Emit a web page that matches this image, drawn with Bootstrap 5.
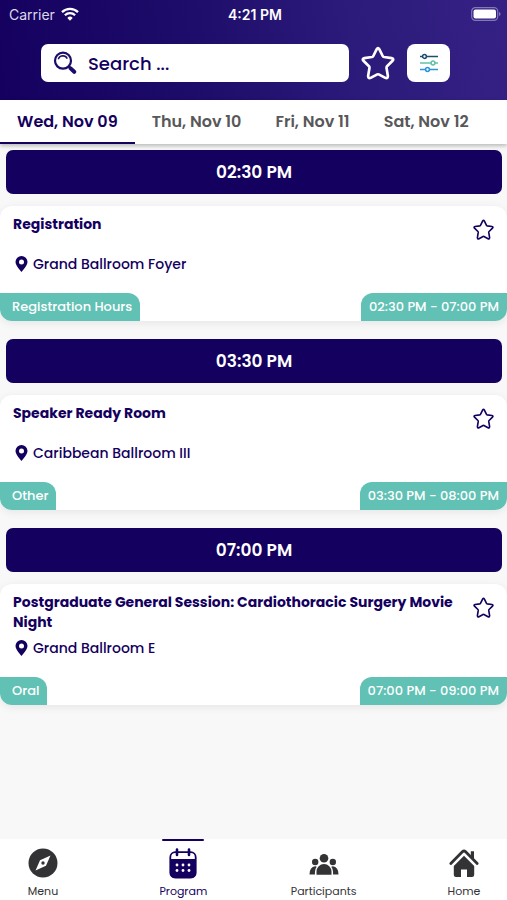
<!DOCTYPE html>
<html lang="en">
<head>
<meta charset="utf-8">
<meta name="viewport" content="width=device-width, initial-scale=1">
<title>Program</title>
<link rel="stylesheet" href="https://cdn.jsdelivr.net/npm/bootstrap@5.3.0/dist/css/bootstrap.min.css">
<style>
:root { --navy: #14005e; --teal: #62c1b5; --ink: #333336; }
body { font-family: Poppins, Inter, "Liberation Sans", sans-serif; background: #f8f8f8; color: var(--navy); }
svg { display: block; flex: none; }
.top-area { background: linear-gradient(80deg, #15005f 0%, #1e0d6a 40%, #2c1b7b 70%, #352184 100%); color: #fff; }
.status-bar { height: 28px; padding: 0 6px 0 9px; font-family: Inter, "Liberation Sans", sans-serif; font-size: 14px; display: grid; grid-template-columns: 1fr auto 1fr; align-items: center; }
.status-bar .clock { font-weight: 600; }
.carrier { color: #dcd9ec; gap: 6px; }
.tools { padding: 16px 57px 18px 41px; gap: 12px; }
.search-field { height: 38px; min-width: 0; border-radius: 7px; background: #fff; padding: 0 12px; gap: 11px; }
.search-field input { width: 100%; border: 0; outline: 0; background: none; padding: 0; min-width: 0; font-size: 18px; font-weight: 500; color: var(--navy); }
.search-field input::placeholder { color: var(--navy); opacity: 1; }
.bare { border: 0; background: none; padding: 0; color: inherit; }
.save-btn { margin-top: 5px; }
.filter-btn { width: 43px; height: 38px; flex: none; padding: 0; border: 0; border-radius: 8px; background: #fff; }
.day-tabs { background: #fff; box-shadow: 0 2px 4px rgba(0,0,0,.25); position: relative; }
.day-tabs a { height: 44px; padding: 0 17px; font-size: 16px; font-weight: 600; line-height: 44px; color: #58585a; text-decoration: none; white-space: nowrap; }
.day-tabs a.active { color: var(--navy); box-shadow: inset 0 -2px var(--navy); }
.slot { margin: 18px 5px 12px 6px; height: 44px; border-radius: 7px; background: var(--navy); color: #fff; font-size: 17px; font-weight: 600; line-height: 44px; text-align: center; }
.slot.first-slot { margin-top: 6px; }
.session { background: #fff; border-radius: 12px; box-shadow: 0 2px 8px rgba(0,0,0,.08); overflow: hidden; }
.session-body { padding: 8px 13px 19px; }
.session h2 { font-size: 14px; line-height: 20px; font-weight: 700; min-height: 34px; margin: 0 0 6px; }
.place { font-size: 14px; line-height: 20px; font-weight: 500; gap: 5px; margin: 0; padding-left: 2px; }
.tag { height: 28px; padding: 0 8px; background: var(--teal); color: #fff; font-size: 13px; line-height: 28px; font-weight: 500; white-space: nowrap; }
.tag-kind { padding-left: 12px; border-top-right-radius: 12px; }
.tag-time { border-top-left-radius: 12px; }
.tab-bar { background: #fff; }
.tab-bar a { width: 86px; height: 61px; padding-top: 8px; color: var(--ink); font-size: 11px; line-height: 16px; text-decoration: none; position: relative; }
.tab-bar a.active { color: var(--navy); }
.tab-bar a.active::before { content: ""; position: absolute; top: 0; left: 22px; right: 22px; height: 2px; background: var(--navy); border-radius: 1px; }
</style>
<script src="https://cdn.jsdelivr.net/npm/bootstrap@5.3.0/dist/js/bootstrap.bundle.min.js"></script>
</head>
<body class="d-flex flex-column min-vh-100">
<svg width="0" height="0" class="position-absolute" aria-hidden="true">
  <symbol id="star" viewBox="0 0 32 32"><path d="M14.8 2.9Q16 .8 17.2 2.9L20.4 9.4Q20.8 10.2 21.7 10.4L28.800 11.400Q31.400 12 29.700 13.900L24.500 19Q23.900 19.600 24 20.500L25.300 28.300Q25.300 31 22.900 30L16.700 26.700Q16 26.400 15.300 26.700L9.100 30Q6.700 31 6.700 28.300L8 20.500Q8.100 19.600 7.500 19L2.300 13.900Q.6 12 3.200 11.400L10.300 10.400Q11.200 10.200 11.600 9.400Z" fill="none" stroke="currentColor" stroke-width="2.500" stroke-linejoin="round"/></symbol>
  <symbol id="pin" viewBox="0 0 12 16"><path fill-rule="evenodd" d="M6 0a6 6 0 0 0-6 6c0 3.500 4.800 8.400 6 10 1.200-1.600 6-6.500 6-10a6 6 0 0 0-6-6Zm0 3.400a2.500 2.500 0 1 1 0 5 2.500 2.500 0 0 1 0-5Z" fill="currentColor"/></symbol>
</svg>

<header class="top-area">
  <div class="status-bar">
    <span class="carrier d-flex align-items-center">Carrier
      <svg width="18" height="14" viewBox="0 0 18 14" fill="none" stroke="#fff" stroke-width="2.300" aria-hidden="true"><path d="M1 5.100a11.500 11.500 0 0 1 16 0M3.900 8.200a7.300 7.300 0 0 1 10.200 0"/><path d="M9 13.700 6.300 10.900a3.900 3.900 0 0 1 5.400 0Z" fill="#fff" stroke="none"/></svg>
    </span>
    <span class="clock">4:21 PM</span>
    <svg class="ms-auto" width="30" height="14" viewBox="0 0 30 14" aria-hidden="true"><rect x=".7" y=".7" width="26" height="12.600" rx="3.600" fill="none" stroke="#8377b5" stroke-width="1.200"/><rect x="2.500" y="2.500" width="22.500" height="9" rx="2" fill="#fff"/><path d="M28 5v4q1.600-.6 1.600-2T28 5Z" fill="#8377b5"/></svg>
  </div>
  <div class="tools d-flex align-items-center">
    <label class="search-field d-flex align-items-center flex-grow-1">
      <svg width="24" height="24" viewBox="0 0 24 24" fill="none" stroke="#1c0b68" aria-hidden="true"><circle cx="10" cy="9.700" r="8" stroke-width="2.200"/><path d="M5.300 8.300A5 5 0 0 1 10 4.800q2.900.1 4.300 2.800" stroke-width="1.500"/><path d="m15.700 15.400 2 2" stroke-width="2.200"/><path d="m17.600 17.400 3.600 3.400" stroke-width="4" stroke-linecap="round"/></svg>
      <input type="text" placeholder="Search ..." aria-label="Search">
    </label>
    <button class="bare" type="button" aria-label="Favorites"><svg width="34" height="34"><use href="#star"/></svg></button>
    <button class="filter-btn d-flex align-items-center justify-content-center" type="button" aria-label="Filters">
      <svg width="18" height="20" viewBox="0 0 18 20" stroke-width="1.500" fill="#fff"><g stroke="#1d4d70"><path d="M0 3.500h18"/><circle cx="4.500" cy="3.500" r="1.900"/></g><g stroke="#62c1a8"><path d="M0 10h18"/><circle cx="13" cy="10" r="1.900"/></g><g stroke="#2a94dc"><path d="M0 16.500h18"/><circle cx="7.500" cy="16.500" r="1.900"/></g></svg>
    </button>
  </div>
</header>

<nav class="day-tabs d-flex" aria-label="Days">
  <a href="#wed" class="active" aria-current="date">Wed, Nov 09</a>
  <a href="#thu">Thu, Nov 10</a>
  <a href="#fri">Fri, Nov 11</a>
  <a href="#sat">Sat, Nov 12</a>
</nav>

<main class="flex-grow-1">
  <div class="slot first-slot">02:30 PM</div>
  <article class="session">
    <div class="session-body d-flex justify-content-between">
      <div>
        <h2>Registration</h2>
        <p class="place d-flex align-items-center"><svg width="13" height="16"><use href="#pin"/></svg>Grand Ballroom Foyer</p>
      </div>
      <button class="bare save-btn align-self-start" type="button" aria-label="Add to favorites"><svg width="21" height="21"><use href="#star"/></svg></button>
    </div>
    <div class="d-flex justify-content-between"><span class="tag tag-kind">Registration Hours</span><span class="tag tag-time">02:30 PM - 07:00 PM</span></div>
  </article>

  <div class="slot">03:30 PM</div>
  <article class="session">
    <div class="session-body d-flex justify-content-between">
      <div>
        <h2>Speaker Ready Room</h2>
        <p class="place d-flex align-items-center"><svg width="13" height="16"><use href="#pin"/></svg>Caribbean Ballroom III</p>
      </div>
      <button class="bare save-btn align-self-start" type="button" aria-label="Add to favorites"><svg width="21" height="21"><use href="#star"/></svg></button>
    </div>
    <div class="d-flex justify-content-between"><span class="tag tag-kind">Other</span><span class="tag tag-time">03:30 PM - 08:00 PM</span></div>
  </article>

  <div class="slot">07:00 PM</div>
  <article class="session">
    <div class="session-body d-flex justify-content-between">
      <div>
        <h2>Postgraduate General Session: Cardiothoracic Surgery Movie Night</h2>
        <p class="place d-flex align-items-center"><svg width="13" height="16"><use href="#pin"/></svg>Grand Ballroom E</p>
      </div>
      <button class="bare save-btn align-self-start" type="button" aria-label="Add to favorites"><svg width="21" height="21"><use href="#star"/></svg></button>
    </div>
    <div class="d-flex justify-content-between"><span class="tag tag-kind">Oral</span><span class="tag tag-time">07:00 PM - 09:00 PM</span></div>
  </article>
</main>

<nav class="tab-bar d-flex justify-content-between" aria-label="Main">
  <a href="#menu" class="d-flex flex-column align-items-center gap-1">
    <svg width="32" height="32" viewBox="0 0 32 32"><circle cx="16" cy="16" r="14.500" fill="currentColor"/><path d="M23.500 8.500 19 18.700 8.500 23.500 13 13.300Z" fill="#fff"/><circle cx="16" cy="16" r="1.700" fill="currentColor"/></svg>Menu
  </a>
  <a href="#program" class="active d-flex flex-column align-items-center gap-1" aria-current="page">
    <svg width="32" height="32" viewBox="0 0 32 32"><rect x="3.300" y="5.200" width="25.400" height="25.500" rx="5" fill="none" stroke="currentColor" stroke-width="1.800"/><path d="M3 12h26v14q0 5-5 5H8q-5 0-5-5Z" fill="currentColor"/><path d="M10 2.500v5.500M22 2.500v5.500" stroke="currentColor" stroke-width="2.600" stroke-linecap="round"/><g fill="#fff"><circle cx="10" cy="18" r="1.400"/><circle cx="16" cy="18" r="1.400"/><circle cx="22" cy="18" r="1.400"/><circle cx="10" cy="23.500" r="1.400"/><circle cx="16" cy="23.500" r="1.400"/><circle cx="22" cy="23.500" r="1.400"/></g></svg>Program
  </a>
  <a href="#participants" class="d-flex flex-column align-items-center gap-1">
    <svg width="32" height="32" viewBox="0 0 32 32" fill="currentColor"><circle cx="16" cy="11.200" r="4.300"/><circle cx="7.200" cy="15" r="3.200"/><circle cx="24.800" cy="15" r="3.200"/><path d="M8.500 27.800v-3.300a7.500 7.500 0 0 1 15 0v3.300ZM1.500 27.500q0-7.500 5.700-8.200l1.600.4Q6.800 22 6.900 27.500ZM30.500 27.500q0-7.500-5.700-8.200l-1.600.4q2 2.300 1.900 7.800Z"/></svg>Participants
  </a>
  <a href="#home" class="d-flex flex-column align-items-center gap-1">
    <svg width="32" height="32" viewBox="0 0 32 32"><path d="M2.800 16.500 14.600 4.600Q16 3.300 17.400 4.600L29.200 16.500" fill="none" stroke="currentColor" stroke-width="2.800" stroke-linecap="round"/><path d="M22.800 4.200h3.200v8l-3.200-3.200Z" fill="currentColor"/><path d="M16 8.800 26.200 19v8.800q0 2.200-2.200 2.200h-5v-7.500h-6V30H8q-2.200 0-2.200-2.200V19Z" fill="currentColor"/></svg>Home
  </a>
</nav>
</body>
</html>
